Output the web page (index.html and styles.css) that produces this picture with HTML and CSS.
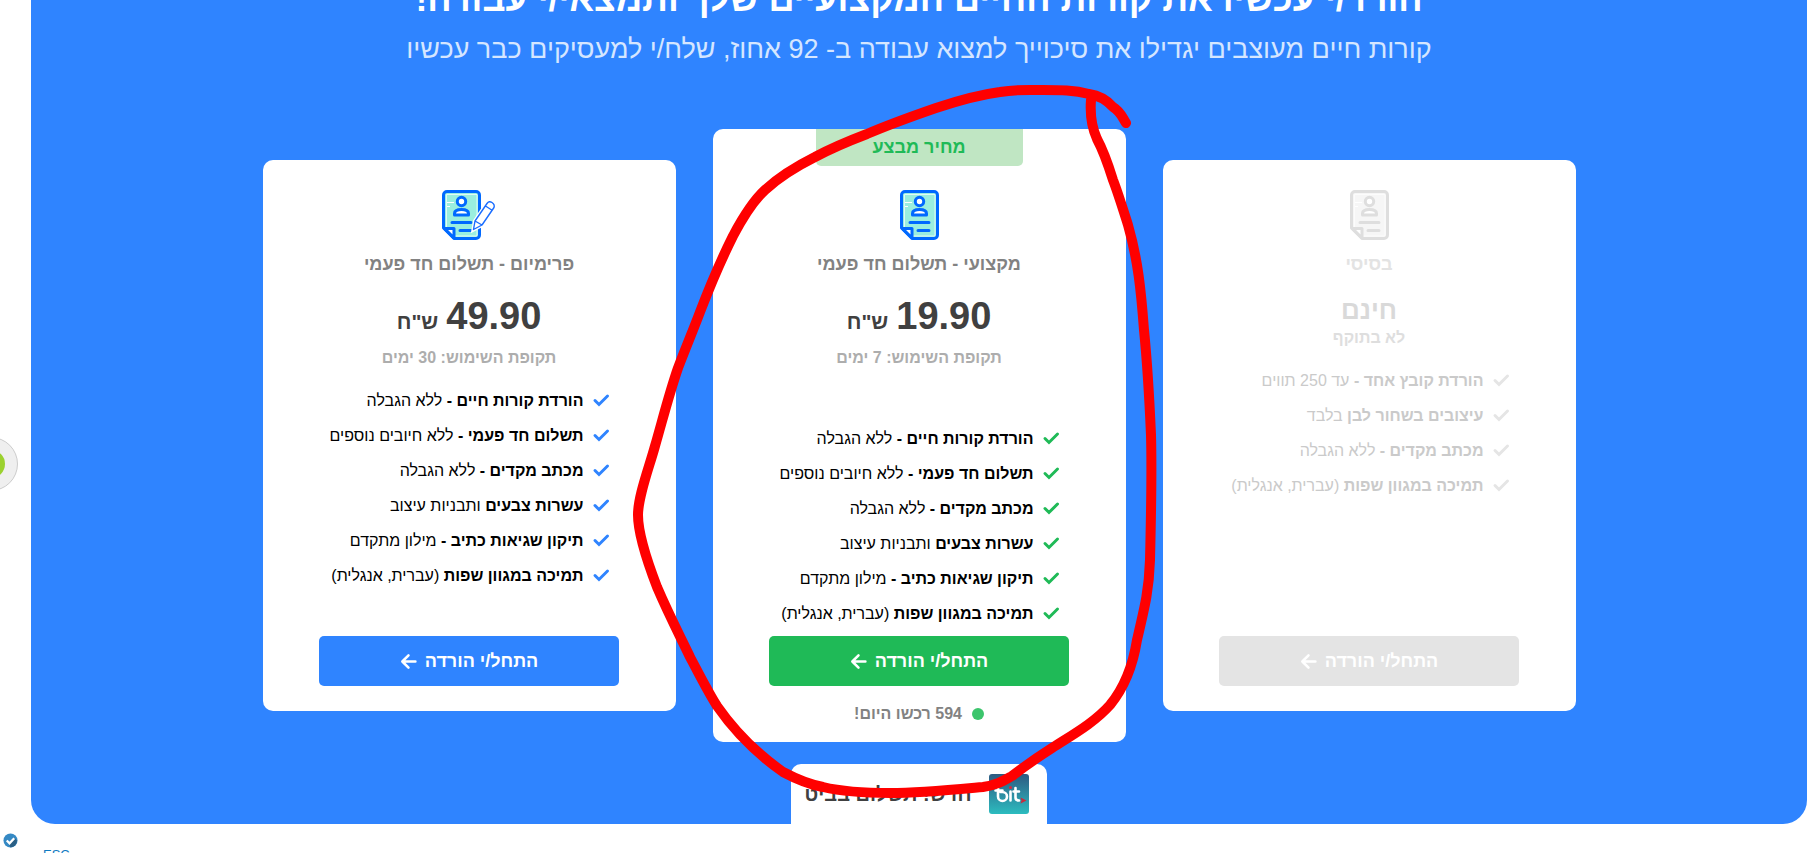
FILE: index.html
```html
<!DOCTYPE html>
<html lang="he" dir="rtl">
<head>
    <meta charset="UTF-8">
    <meta name="viewport" content="width=device-width, initial-scale=1.0">
    <title>הורדת קורות חיים</title>
    <link rel="stylesheet" href="styles.css">
</head>
<body>
    <svg class="sprite" aria-hidden="true">
        <symbol id="doc" viewBox="0 0 39 50">
            <path class="doc-fill" d="M3 3h33v44H13L3 37z"/>
            <path d="M4.500 37V4.500H35V46" fill="none" stroke="#fff" stroke-opacity=".7"/>
            <path d="M12 46H35" fill="none" stroke="#fff" stroke-opacity=".7"/>
            <path d="M5 12.500h7M5 16.500h3" stroke="#fff"/>
            <path class="doc-line" d="M5 1.500h29a3.500 3.500 0 0 1 3.500 3.500v40a3.500 3.500 0 0 1-3.500 3.500H12L1.500 38V5A3.500 3.500 0 0 1 5 1.500z"/>
            <path class="doc-line doc-white" d="M2.500 38.500H12V48z"/>
            <circle class="doc-line doc-white" cx="19.500" cy="11.500" r="4.200"/>
            <path class="doc-line doc-white" d="M12.500 25v-1.500c0-3 3-4 7-4s7 1 7 4V25z"/>
            <path class="doc-line" d="M10 32.500h19M18 40.500h11"/>
        </symbol>
        <symbol id="check" viewBox="0 0 18 18">
            <path d="M3 8.500 7 12.500 15.500 4" fill="none" stroke="currentColor" stroke-width="3" stroke-linecap="round"/>
        </symbol>
        <symbol id="arrow" viewBox="0 0 16 16">
            <path d="M8 2.200 2.200 8 8 13.800M2.500 8H14.500" fill="none" stroke="currentColor" stroke-width="2.400" stroke-linecap="round" stroke-linejoin="round"/>
        </symbol>
    </svg>

    <main class="pricing">
        <h1>הורד/י עכשיו את קורות החיים המקצועיים שלך ותמצאי/י עבודה!</h1>
        <p class="subtitle">קורות חיים מעוצבים יגדילו את סיכוייך למצוא עבודה ב- 92 אחוז, שלח/י למעסיקים כבר עכשיו</p>

        <div class="plans">
            <section class="plan basic">
                <svg class="plan-icon"><use href="#doc"/></svg>
                <h2>בסיסי</h2>
                <div class="price free">חינם</div>
                <div class="period">לא בתוקף</div>
                <ul>
                    <li><svg><use href="#check"/></svg><span><b>הורדת קובץ אחד -</b> עד 250 תווים</span></li>
                    <li><svg><use href="#check"/></svg><span><b>עיצובים בשחור לבן</b> בלבד</span></li>
                    <li><svg><use href="#check"/></svg><span><b>מכתב מקדים -</b> ללא הגבלה</span></li>
                    <li><svg><use href="#check"/></svg><span><b>תמיכה במגוון שפות</b> (עברית, אנגלית)</span></li>
                </ul>
                <button type="button" disabled>התחל/י הורדה <svg><use href="#arrow"/></svg></button>
            </section>

            <section class="plan pro">
                <div class="sale">מחיר מבצע</div>
                <svg class="plan-icon"><use href="#doc"/></svg>
                <h2>מקצועי - תשלום חד פעמי</h2>
                <div class="price">19.90 <small>ש"ח</small></div>
                <div class="period">תקופת השימוש: 7 ימים</div>
                <ul>
                    <li><svg><use href="#check"/></svg><span><b>הורדת קורות חיים -</b> ללא הגבלה</span></li>
                    <li><svg><use href="#check"/></svg><span><b>תשלום חד פעמי -</b> ללא חיובים נוספים</span></li>
                    <li><svg><use href="#check"/></svg><span><b>מכתב מקדים -</b> ללא הגבלה</span></li>
                    <li><svg><use href="#check"/></svg><span><b>עשרות צבעים</b> ותבניות עיצוב</span></li>
                    <li><svg><use href="#check"/></svg><span><b>תיקון שגיאות כתיב -</b> מילון מתקדם</span></li>
                    <li><svg><use href="#check"/></svg><span><b>תמיכה במגוון שפות</b> (עברית, אנגלית)</span></li>
                </ul>
                <button type="button">התחל/י הורדה <svg><use href="#arrow"/></svg></button>
                <div class="bought"><i class="dot"></i>594 רכשו היום!</div>
            </section>

            <section class="plan premium">
                <svg class="plan-icon wide" viewBox="0 0 54 50">
                    <use href="#doc" width="39" height="50"/>
                    <path d="M31.500 39.500 33 31 45 13.500q2-3 5-1t2 5L40 35z" fill="#fff" stroke="#fff" stroke-width="4"/>
                    <path d="M31.500 39.500 33 31 45 13.500q2-3 5-1t2 5L40 35zM33 31l7 4M43.500 16l7 4.500" fill="#fff" stroke="#1a6dff" stroke-width="1.400" stroke-linejoin="round"/>
                </svg>
                <h2>פרימיום - תשלום חד פעמי</h2>
                <div class="price">49.90 <small>ש"ח</small></div>
                <div class="period">תקופת השימוש: 30 ימים</div>
                <ul>
                    <li><svg><use href="#check"/></svg><span><b>הורדת קורות חיים -</b> ללא הגבלה</span></li>
                    <li><svg><use href="#check"/></svg><span><b>תשלום חד פעמי -</b> ללא חיובים נוספים</span></li>
                    <li><svg><use href="#check"/></svg><span><b>מכתב מקדים -</b> ללא הגבלה</span></li>
                    <li><svg><use href="#check"/></svg><span><b>עשרות צבעים</b> ותבניות עיצוב</span></li>
                    <li><svg><use href="#check"/></svg><span><b>תיקון שגיאות כתיב -</b> מילון מתקדם</span></li>
                    <li><svg><use href="#check"/></svg><span><b>תמיכה במגוון שפות</b> (עברית, אנגלית)</span></li>
                </ul>
                <button type="button">התחל/י הורדה <svg><use href="#arrow"/></svg></button>
            </section>
        </div>

        <div class="bit">
            <svg class="bit-logo" viewBox="0 0 40 40">
                <defs>
                    <linearGradient id="bitbg" x1="0" y1="0" x2="0" y2="1">
                        <stop offset="0" stop-color="#2d5a82"/>
                        <stop offset="1" stop-color="#2cbcbf"/>
                    </linearGradient>
                </defs>
                <rect width="40" height="40" rx="3" fill="url(#bitbg)"/>
                <g fill="none" stroke="#fff" stroke-width="2.600" stroke-linecap="round">
                    <path d="M6.500 16.500h7M9 14v8.500a4.500 4.500 0 1 0 4.500-4.500h-2M21.500 17.500v9M26.500 14v9.500q0 3 3.500 3M24.500 17.500h5.500"/>
                </g>
                <circle cx="21.500" cy="13.500" r="1.500" fill="#e0243a"/>
                <path d="m31.500 23.500 6 3-6 3 1-3z" fill="#c92a3c"/>
            </svg>
            <span>חדש! תשלום בביט</span>
        </div>
    </main>

    <footer>
        <a href="#">ESC</a>
    </footer>

    <div class="widget"><i></i></div>
    <svg class="verified" viewBox="0 0 16 16">
        <circle cx="8" cy="8" r="7.500" fill="#3589c4"/>
        <path d="M12 5l3 3a7.500 7.500 0 0 1-7 7.500L6.500 12z" fill="#2a5f85"/>
        <path d="m4 8 3 3 5-5.500" fill="none" stroke="#fff" stroke-width="2.400"/>
    </svg>

    <!-- hand-drawn marker around the recommended plan -->
    <svg class="marker" width="520" height="740" viewBox="620 70 520 740">
        <path d="M1126 123C1122 117 1121 112 1113 107C1105 98 1096 95 1089 94C1074 90 1060 90 1043 90C1030 90 1018 89 1000 92C985 94 960 100 936 108C910 117 888 125 867 134C846 142 830 149 815 157C795 167 778 178 765 190C752 202 742 219 733 236C720 262 710 286 700 312C694 328 686 347 678 368C669 394 662 422 655 446C649 468 638 496 638 515C638 534 647 561 657 587C669 615 680 636 690 657C699 674 708 692 717 706C733 729 756 753 783 772C800 781 812 785 823 787C840 791 860 793 890 793C920 793 950 790 983 787C997 785 1003 781 1012 776C1025 766 1038 757 1052 748C1072 735 1094 723 1110 705C1124 688 1133 665 1137 640C1145 606 1149 590 1150 560C1151 520 1152 470 1151 435C1149 390 1147 360 1144 330C1141 290 1138 260 1128 225C1122 206 1118 193 1113 180C1108 164 1103 150 1097 139C1092 128 1090 113 1091 100"/>
    </svg>
</body>
</html>
```
FILE: styles.css
```css
* {
    box-sizing: border-box;
}
body {
    margin: 0;
    height: 100vh;
    overflow: hidden;
    position: relative;
    font-family: "Liberation Sans", Arial, sans-serif;
    background-color: #fff;
}
.sprite {
    display: none;
}
.pricing {
    margin: -40px 5px 0 31px;
    padding-top: 18px;
    border-radius: 24px;
    background-color: #2f84ff;
    display: flex;
    flex-direction: column;
    align-items: center;
}
h1 {
    margin: 0;
    font-size: 36px;
    line-height: 42px;
    color: #fff;
}
.subtitle {
    margin: 12px 0 63px;
    font-size: 27px;
    line-height: 34px;
    color: #d5e6ff;
}
.plans {
    display: flex;
    align-items: center;
    justify-content: center;
    gap: 37px;
    width: 100%;
}
.plan {
    width: 413px;
    min-height: 551px;
    padding: 30px 56px 25px;
    border-radius: 10px;
    background-color: #fff;
    display: flex;
    flex-direction: column;
    align-items: center;
}
.plan.pro {
    min-height: 613px;
    padding-top: 0;
    padding-bottom: 16px;
}
.sale {
    width: 207px;
    margin-bottom: 24px;
    border-radius: 0 0 5px 5px;
    background-color: #c0e6c3;
    color: #1fba57;
    font-size: 18px;
    font-weight: bold;
    line-height: 37px;
    text-align: center;
}
.plan-icon {
    flex: none;
    width: 39px;
    height: 50px;
    --line: #0069ff;
    --fill: #9aeedf;
}
.plan-icon.wide {
    width: 54px;
}
.basic .plan-icon {
    --line: #dedede;
    --fill: #f6f6f6;
}
.doc-fill {
    fill: var(--fill);
}
.doc-line {
    fill: none;
    stroke: var(--line);
    stroke-width: 3;
    stroke-linecap: round;
    stroke-linejoin: round;
}
.doc-white {
    fill: #fff;
}
h2 {
    margin: 12px 0 16px;
    font-size: 18px;
    line-height: 24px;
    color: #828282;
}
.price {
    display: flex;
    align-items: baseline;
    gap: 8px;
    font-size: 38px;
    font-weight: bold;
    line-height: 48px;
    color: #404040;
}
.price small {
    font-size: 21px;
}
.price.free {
    font-size: 26px;
    line-height: 36px;
    color: #d9d9d9;
}
.period {
    font-size: 16px;
    font-weight: bold;
    line-height: 20px;
    margin: 2px 0 15px;
    color: #adadad;
}
.free + .period {
    margin: 0 0 15px;
}
ul {
    align-self: stretch;
    list-style: none;
    margin: 0;
    padding: 0 10px;
    font-size: 16px;
    line-height: 35px;
    white-space: nowrap;
}
.pro ul {
    margin-top: 38px;
}
li {
    display: flex;
    align-items: center;
    gap: 8px;
}
li svg {
    flex: none;
    width: 18px;
    height: 18px;
    color: #2f84ff;
}
.pro li svg {
    color: #1fba57;
}
button {
    width: 300px;
    height: 50px;
    margin-top: auto;
    border: 0;
    border-radius: 5px;
    background-color: #2f84ff;
    color: #fff;
    font: bold 18px "Liberation Sans", Arial, sans-serif;
    cursor: pointer;
    display: flex;
    align-items: center;
    justify-content: center;
    gap: 8px;
}
button svg {
    width: 17px;
    height: 17px;
}
.pro button {
    background-color: #1fba57;
}
.basic h2 {
    color: #e3e3e3;
}
.basic .period {
    color: #dedede;
}
.basic ul {
    color: #cacaca;
}
.basic li svg {
    color: #e5e5e5;
}
.basic button {
    background-color: #e4e4e4;
    cursor: default;
}
.bought {
    display: flex;
    align-items: center;
    gap: 10px;
    margin-top: 16px;
    font-size: 16px;
    font-weight: bold;
    line-height: 24px;
    color: #828282;
}
.dot {
    width: 12px;
    height: 12px;
    border-radius: 50%;
    background-color: #3cc56c;
}
.bit {
    display: flex;
    align-items: center;
    gap: 18px;
    height: 60px;
    margin-top: 22px;
    padding: 0 18px 0 14px;
    border-radius: 10px 10px 0 0;
    background-color: #fff;
    color: #404040;
    font-size: 20px;
    font-weight: bold;
}
.bit-logo {
    width: 40px;
    height: 40px;
}
footer {
    direction: ltr;
    padding: 21px 43px;
    font-size: 13px;
    line-height: 20px;
}
footer a {
    color: #0f7ac2;
    text-decoration: none;
}
.widget {
    position: absolute;
    left: -36px;
    top: 437px;
    width: 54px;
    height: 54px;
    border: 1px solid #ccc;
    border-radius: 50%;
    background-color: #efefef;
    display: flex;
    align-items: center;
    justify-content: center;
}
.widget i {
    width: 28px;
    height: 28px;
    border-radius: 50%;
    background-color: #9bd12f;
}
.verified {
    position: absolute;
    left: 3px;
    top: 833px;
    width: 15px;
    height: 15px;
}
.marker {
    position: absolute;
    left: 620px;
    top: 70px;
    pointer-events: none;
    overflow: visible;
}
.marker path {
    fill: none;
    stroke: #f00;
    stroke-width: 10;
    stroke-linecap: round;
    stroke-linejoin: round;
}
```
